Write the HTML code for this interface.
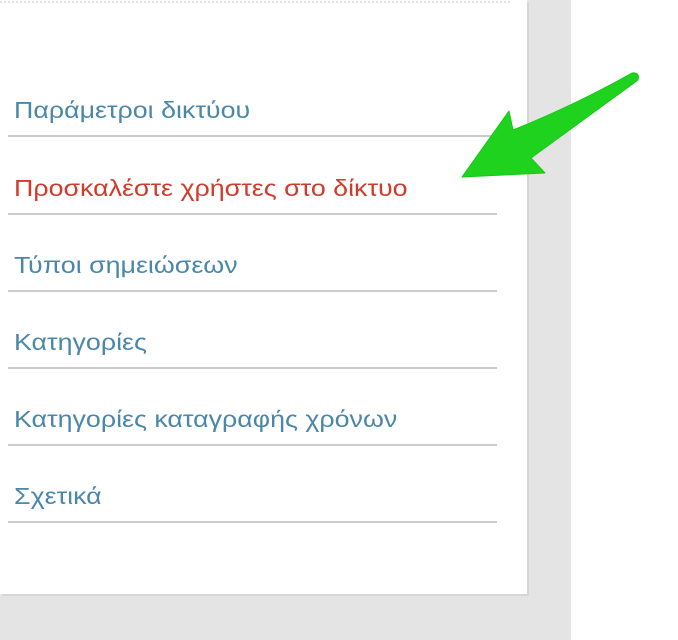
<!DOCTYPE html>
<html><head><meta charset="utf-8"><style>
body{margin:0;width:678px;height:640px;background:#fff;position:relative;overflow:hidden;font-family:"Liberation Sans","DejaVu Sans",sans-serif}
.gray{position:absolute;left:0;top:0;width:571px;height:640px;background:#e4e4e4}
.panel{position:absolute;left:0;top:0;width:527px;height:594px;background:#fff;box-shadow:2px 2px 0 #d6d6d6}
.dots{position:absolute;left:0;top:1px;width:510px;border-top:2px dotted #e2e2e2}
.item{position:absolute;left:8px;width:489px;height:38px;border-bottom:2px solid #cccccc;box-sizing:content-box}
.item span{position:absolute;left:6px;top:0;font-size:23px;line-height:26px;color:#4a87a9;white-space:nowrap;transform:scaleX(1.165);transform-origin:0 0}
.item span.red{color:#d03b2b}
</style></head><body>
<div class="gray"></div>
<div class="panel"><div class="dots"></div>
<div class="item" style="top:97px"><span>Παράμετροι δικτύου</span></div>
<div class="item" style="top:175px"><span class="red">Προσκαλέστε χρήστες στο δίκτυο</span></div>
<div class="item" style="top:252px"><span>Τύποι σημειώσεων</span></div>
<div class="item" style="top:329px"><span>Κατηγορίες</span></div>
<div class="item" style="top:406px"><span>Κατηγορίες καταγραφής χρόνων</span></div>
<div class="item" style="top:483px"><span>Σχετικά</span></div>
</div>
<svg style="position:absolute;left:0;top:0" width="678" height="640">
<path d="M462,177 L509,111 L513,130 Q575,105 632,73 Q640,72 638,80 Q590,115 531,158 L545,173 Z" fill="#1ed21e" stroke="#17c817" stroke-width="1" stroke-linejoin="round"/>
</svg>
</body></html>
